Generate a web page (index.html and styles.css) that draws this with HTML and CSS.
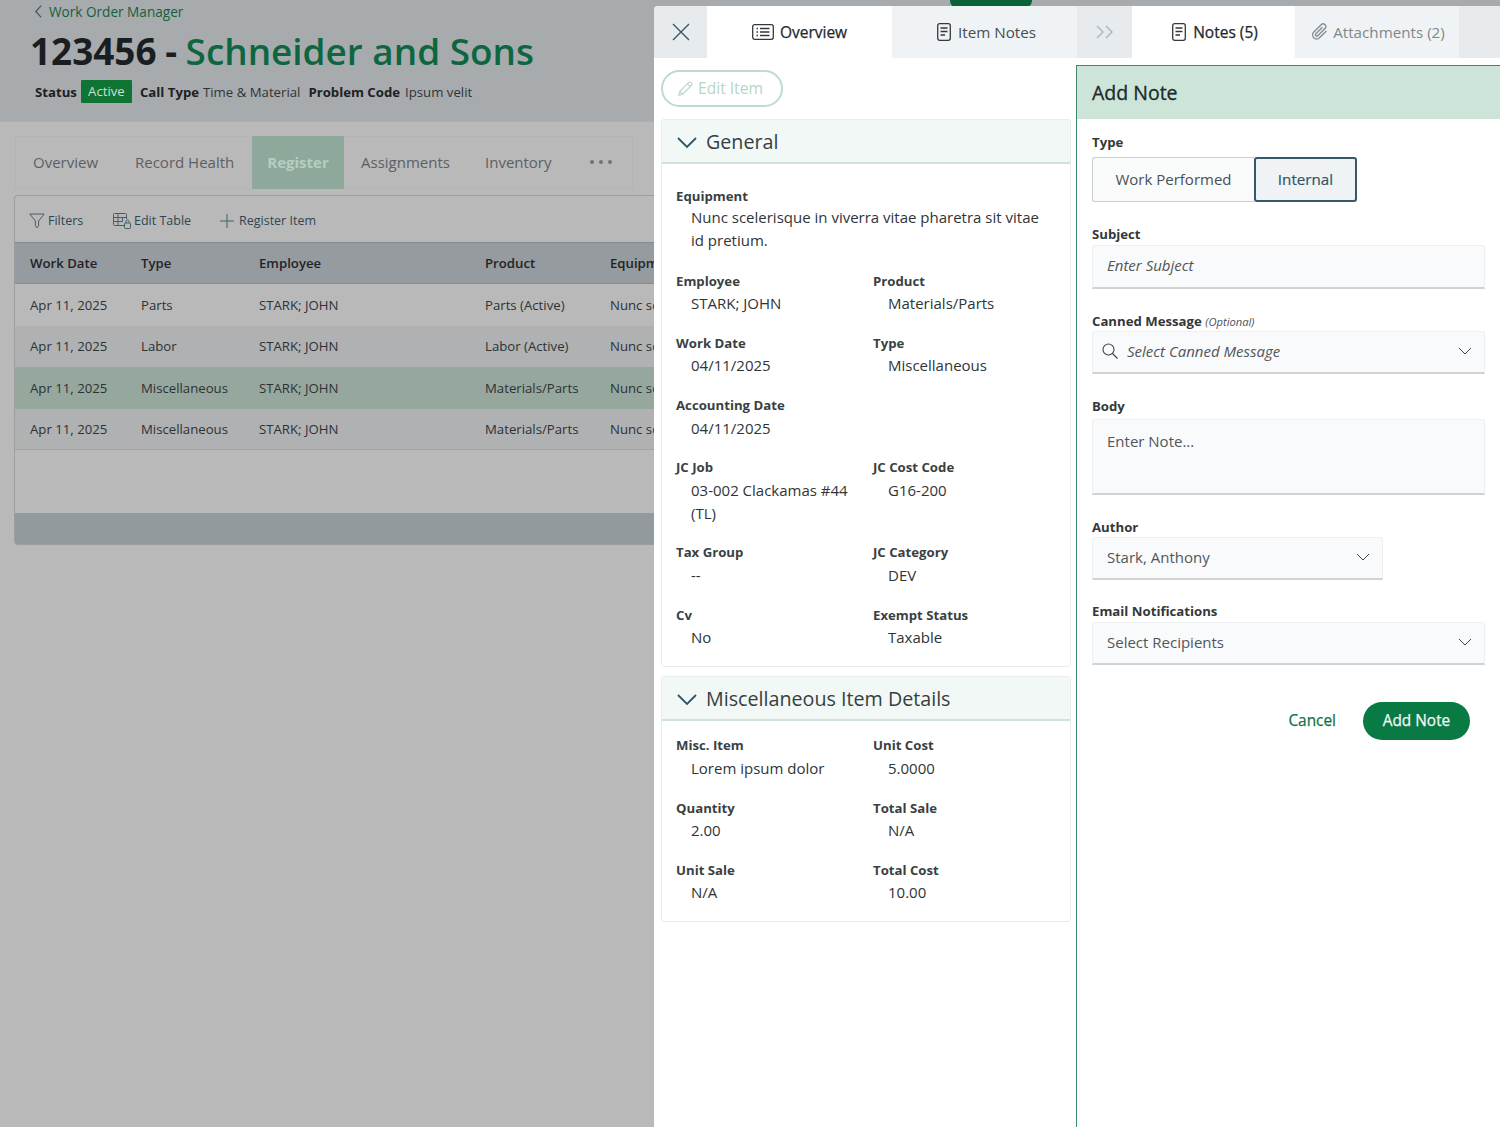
FILE: index.html
```html
<!DOCTYPE html>
<html lang="en">
<head>
<meta charset="utf-8">
<title>Work Order</title>
<link rel="stylesheet" href="styles.css">
</head>
<body>
<div class="app">
  <div class="backdrop">
    <header class="page-head">
      <a class="crumb"><svg class="crumb-icon" viewBox="0 0 10 16"><path d="M8 1.500 2 8l6 6.500"/></svg>Work Order Manager</a>
      <h1 class="title"><span class="title-num">123456 - </span><span class="title-name">Schneider and Sons</span></h1>
      <div class="meta">
        <b>Status</b><span class="badge">Active</span>
        <b class="meta-key">Call Type</b><span class="meta-val">Time &amp; Material</span>
        <b class="meta-key">Problem Code</b><span class="meta-val">Ipsum velit</span>
      </div>
    </header>
    <nav class="page-tabs">
      <span class="ptab ptab-overview">Overview</span>
      <span class="ptab ptab-health">Record Health</span>
      <span class="ptab ptab-active">Register</span>
      <span class="ptab ptab-assign">Assignments</span>
      <span class="ptab ptab-inv">Inventory</span>
      <span class="ptab-dots"><i></i><i></i><i></i></span>
    </nav>
    <section class="table-card">
      <div class="toolbar">
        <span class="tool tool-filter"><svg class="tool-icon" viewBox="0 0 16 16"><path d="M.8 1h14.400L9.600 8v4.600L8 14.800l-1.600-2.200V8z"/></svg>Filters</span>
        <span class="tool tool-edit"><svg class="tool-icon tool-icon-wide" viewBox="0 0 18 16"><path d="M11 12.500H1.500a1 1 0 0 1-1-1v-10a1 1 0 0 1 1-1h11a1 1 0 0 1 1 1V6M.5 4.500h13M.5 8.500h9M5 .5v12M9.500 4.500v4"/><rect x="11.500" y="10" width="6" height="5.500" rx=".8"/><path d="M13 10V8.500a1.500 1.500 0 0 1 3 0V10"/></svg>Edit Table</span>
        <span class="tool"><svg class="tool-icon" viewBox="0 0 16 16"><path d="M7 1v14M0 8h14"/></svg>Register Item</span>
      </div>
      <div class="grid-row grid-head"><span>Work Date</span><span>Type</span><span>Employee</span><span>Product</span><span>Equipm</span></div>
      <div class="grid-row row-a"><span>Apr 11, 2025</span><span>Parts</span><span>STARK; JOHN</span><span>Parts (Active)</span><span>Nunc sc</span></div>
      <div class="grid-row row-b"><span>Apr 11, 2025</span><span>Labor</span><span>STARK; JOHN</span><span>Labor (Active)</span><span>Nunc sc</span></div>
      <div class="grid-row row-sel"><span>Apr 11, 2025</span><span>Miscellaneous</span><span>STARK; JOHN</span><span>Materials/Parts</span><span>Nunc sc</span></div>
      <div class="grid-row row-b row-last"><span>Apr 11, 2025</span><span>Miscellaneous</span><span>STARK; JOHN</span><span>Materials/Parts</span><span>Nunc sc</span></div>
      <div class="table-empty"></div>
      <div class="table-foot"></div>
    </section>
    <span class="peek-button"></span>
  </div>

  <aside class="drawer">
    <div class="pane pane-left">
      <div class="tabs">
        <span class="tab-icon-cell tab-close"><svg class="close-icon" viewBox="0 0 18 18"><path d="M1 1l16 16M17 1 1 17"/></svg></span>
        <span class="tab tab-on tab-over"><svg class="list-icon" viewBox="0 0 22 16"><rect x=".7" y=".7" width="20.600" height="14.600" rx="2"/><path d="M4.500 4.500h1.500M4.500 8h1.500M4.500 11.500h1.500M8 4.500h9.500M8 8h9.500M8 11.500h9.500"/></svg>Overview</span>
        <span class="tab tab-off tab-inotes"><svg class="doc-icon" viewBox="0 0 14 18"><rect x=".7" y=".7" width="12.600" height="16.600" rx="2"/><path d="M3.500 5h7M3.500 8.500h7M3.500 12h4.500"/></svg>Item Notes</span>
      </div>
      <div class="pane-body">
        <button class="edit-btn"><svg class="pencil-icon" viewBox="0 0 16 16"><path d="M1 15l1-4L11.500 1.500a1.400 1.400 0 0 1 2 0l1 1a1.400 1.400 0 0 1 0 2L5 14zM2 11l3 3M10 3l3 3"/></svg><span>Edit Item</span></button>
        <section class="card">
          <h2 class="card-head"><svg class="chev-big" viewBox="0 0 20 12"><path d="M1 1l9 9 9-9"/></svg>General</h2>
          <div class="fields fields-general">
            <div class="field field-wide field-first"><div class="f-label">Equipment</div><div class="f-value">Nunc scelerisque in viverra vitae pharetra sit vitae id pretium.</div></div>
            <div class="field"><div class="f-label">Employee</div><div class="f-value">STARK; JOHN</div></div>
            <div class="field"><div class="f-label">Product</div><div class="f-value">Materials/Parts</div></div>
            <div class="field"><div class="f-label">Work Date</div><div class="f-value">04/11/2025</div></div>
            <div class="field"><div class="f-label">Type</div><div class="f-value">Miscellaneous</div></div>
            <div class="field field-wide"><div class="f-label">Accounting Date</div><div class="f-value">04/11/2025</div></div>
            <div class="field"><div class="f-label">JC Job</div><div class="f-value">03-002 Clackamas #44 (TL)</div></div>
            <div class="field"><div class="f-label">JC Cost Code</div><div class="f-value">G16-200</div></div>
            <div class="field"><div class="f-label">Tax Group</div><div class="f-value">--</div></div>
            <div class="field"><div class="f-label">JC Category</div><div class="f-value">DEV</div></div>
            <div class="field"><div class="f-label">Cv</div><div class="f-value">No</div></div>
            <div class="field"><div class="f-label">Exempt Status</div><div class="f-value">Taxable</div></div>
          </div>
        </section>
        <section class="card">
          <h2 class="card-head"><svg class="chev-big" viewBox="0 0 20 12"><path d="M1 1l9 9 9-9"/></svg>Miscellaneous Item Details</h2>
          <div class="fields fields-misc">
            <div class="field"><div class="f-label">Misc. Item</div><div class="f-value">Lorem ipsum dolor</div></div>
            <div class="field"><div class="f-label">Unit Cost</div><div class="f-value">5.0000</div></div>
            <div class="field"><div class="f-label">Quantity</div><div class="f-value">2.00</div></div>
            <div class="field"><div class="f-label">Total Sale</div><div class="f-value">N/A</div></div>
            <div class="field"><div class="f-label">Unit Sale</div><div class="f-value">N/A</div></div>
            <div class="field"><div class="f-label">Total Cost</div><div class="f-value">10.00</div></div>
          </div>
        </section>
      </div>
    </div>

    <div class="pane pane-right">
      <div class="tabs">
        <span class="tab-icon-cell tab-expand"><svg class="dbl-icon" viewBox="0 0 18 14"><path d="M1 1l6 6-6 6M10 1l6 6-6 6"/></svg></span>
        <span class="tab tab-on tab-notes"><svg class="doc-icon" viewBox="0 0 14 18"><rect x=".7" y=".7" width="12.600" height="16.600" rx="2"/><path d="M3.500 5h7M3.500 8.500h7M3.500 12h4.500"/></svg>Notes (5)</span>
        <span class="tab tab-off tab-attach"><svg class="clip-icon" viewBox="0 0 16 17"><path d="M14.500 7.500 8 14a3.800 3.800 0 0 1-5.400-5.400l7-7a2.500 2.500 0 0 1 3.600 3.600l-6.800 6.800a1.200 1.200 0 0 1-1.800-1.800L10.800 4"/></svg>Attachments (2)</span>
        <span class="tab-fill"></span>
      </div>
      <form class="note-form">
        <h2 class="form-head">Add Note</h2>
        <div class="form-body">
          <div class="ctl-group">
            <label class="ctl-label">Type</label>
            <div class="toggle">
              <span class="toggle-opt">Work Performed</span>
              <span class="toggle-opt toggle-on">Internal</span>
            </div>
          </div>
          <div class="ctl-group">
            <label class="ctl-label">Subject</label>
            <div class="ctl ctl-subject ph-italic">Enter Subject</div>
          </div>
          <div class="ctl-group">
            <label class="ctl-label">Canned Message <em class="optional">(Optional)</em></label>
            <div class="ctl ctl-canned ph-italic">
              <svg class="search-icon" viewBox="0 0 16 16"><circle cx="6.500" cy="6.500" r="5.500"/><path d="M10.500 10.500 15.500 15.500"/></svg>
              <span>Select Canned Message</span>
              <svg class="chev" viewBox="0 0 14 8"><path d="M1 1l6 6 6-6"/></svg>
            </div>
          </div>
          <div class="ctl-group">
            <label class="ctl-label">Body</label>
            <div class="ctl ctl-body">Enter Note...</div>
          </div>
          <div class="ctl-group">
            <label class="ctl-label">Author</label>
            <div class="ctl ctl-author"><span>Stark, Anthony</span><svg class="chev" viewBox="0 0 14 8"><path d="M1 1l6 6 6-6"/></svg></div>
          </div>
          <div class="ctl-group">
            <label class="ctl-label">Email Notifications</label>
            <div class="ctl ctl-email"><span>Select Recipients</span><svg class="chev" viewBox="0 0 14 8"><path d="M1 1l6 6 6-6"/></svg></div>
          </div>
          <div class="actions">
            <span class="cancel">Cancel</span>
            <span class="submit">Add Note</span>
          </div>
        </div>
      </form>
    </div>
  </aside>
</div>
</body>
</html>
```
FILE: styles.css
```css
* { box-sizing: border-box; }
html, body { margin: 0; padding: 0; }
body { font-family: "Open Sans", "Liberation Sans", sans-serif; color: #2c3236; background: #b9b9b9; }
svg { fill: none; stroke: currentColor; stroke-width: 1.3; flex: none; display: block; }
.app { position: relative; width: 1500px; height: 1127px; overflow: hidden; background: #b9b9b9; }

/* dimmed page */
.backdrop { width: 1500px; height: 1127px; }
.page-head { height: 122px; background: #a7abae; padding: 1px 0 0 31px; border-bottom: 1px solid #adb0b2; }
.crumb { display: flex; align-items: center; height: 20px; font-size: 13.600px; color: #155f3d; font-weight: 500; padding-left: 3px; }
.crumb-icon { width: 9px; height: 15px; margin-right: 6px; color: #3b5560; }
.title { margin: 2px 0 0 -1px; font-size: 36.900px; line-height: 56px; letter-spacing: 0; white-space: nowrap; }
.title-num { color: #1b1e20; font-weight: 700; word-spacing: -1px; }
.title-name { color: #0d6640; font-weight: 600; }
.meta { display: flex; align-items: center; height: 23px; margin-top: 1px; padding-left: 4px; font-size: 13.200px; white-space: nowrap; color: #2f3437; }
.meta b { font-weight: 700; color: #1d2123; }
.badge { width: 51px; height: 23px; margin: 0 8px 0 4px; line-height: 23px; text-align: center; color: #c7e2cf; background: #0f7434; border-radius: 1px; }
.meta-val { margin: 0 8px 0 4px; }
.meta-val:last-child { margin-left: 5px; }

.page-tabs { position: relative; display: flex; align-items: stretch; height: 53px; width: 618px; margin: 14px 0 0 15px; border: 1px solid #b4b4b4; border-radius: 2px; font-size: 15px; color: #5c6063; }
.ptab { display: flex; align-items: center; white-space: nowrap; padding-bottom: 1px; }
.ptab-overview { margin-left: 17px; width: 102px; }
.ptab-health { width: 117px; }
.ptab-active { width: 92px; margin: -1px 0; justify-content: center; background: #8ea89b; color: #b5cec2; font-weight: 700; }
.ptab-assign { margin-left: 17px; width: 124px; }
.ptab-inv { width: 105px; }
.ptab-dots { display: flex; align-items: center; gap: 5px; padding-bottom: 1px; }
.ptab-dots i { width: 4px; height: 4px; border-radius: 50%; background: #6f7477; }

.table-card { width: 640px; height: 350px; margin: 6px 0 0 14px; border: 1px solid #999fa3; border-right: 0; border-radius: 4px 0 0 4px; overflow: hidden; font-size: 13.200px; display: flex; flex-direction: column; background: #b9b9b9; }
.toolbar { display: flex; align-items: center; height: 46px; flex: none; padding: 3px 0 0 14px; font-size: 12.500px; color: #30464f; font-weight: 500; }
.tool { display: flex; align-items: center; gap: 3px; white-space: nowrap; }
.tool-filter { width: 84px; }
.tool-edit { width: 107px; }
.tool-icon { width: 16px; height: 16px; color: #44606c; stroke-width: 1; }
.tool-icon-wide { width: 18px; }
.grid-row { display: grid; grid-template-columns: 111px 118px 226px 125px 44px; align-items: center; padding-left: 15px; height: 41.500px; flex: none; color: #2d3134; white-space: nowrap; }
.grid-row span:last-child { overflow: hidden; }
.grid-head { height: 42px; background: #959b9f; border-top: 1px solid #858c90; border-bottom: 1px solid #858c90; font-weight: 600; color: #1f2427; }
.row-a { background: #b9b9b9; }
.row-b { background: #afb1b3; }
.row-sel { background: #96a89e; }
.row-last { border-bottom: 1px solid #a0a4a6; }
.table-empty { flex: 1; }
.table-foot { height: 31px; flex: none; background: #929a9e; }
.peek-button { position: absolute; left: 950px; top: -14px; width: 82px; height: 30px; border-radius: 50%; background: #0a6238; }

/* drawer */
.drawer { position: absolute; left: 654px; top: 6px; right: 0; bottom: 0; display: flex; background: #fff; border-top-left-radius: 4px; overflow: hidden; }
.pane { display: flex; flex-direction: column; min-width: 0; }
.pane-left { width: 423px; flex: none; }
.pane-right { flex: 1; }
.tabs { display: flex; height: 52px; flex: none; font-size: 15.200px; }
.tab-icon-cell { display: flex; align-items: center; justify-content: center; background: #e7ebee; }
.tab-close { width: 53px; color: #2f5568; }
.tab-expand { width: 55px; color: #a9b3b9; }
.close-icon { width: 18px; height: 18px; }
.dbl-icon { width: 18px; height: 14px; }
.tab { display: flex; align-items: center; justify-content: center; gap: 7px; padding-bottom: 1px; white-space: nowrap; }
.tab-on { background: #fff; color: #23282b; font-size: 15.500px; -webkit-text-stroke: .25px #23282b; }
.tab-off { background: #f0f3f5; color: #474d51; }
.tab-over { width: 185px; gap: 6px; }
.tab-inotes { width: 185px; padding-left: 4px; }
.tab-notes { width: 163px; padding-left: 3px; }
.tab-attach { width: 164px; padding-left: 2px; color: #7f878c; gap: 5px; }
.tab-fill { flex: 1; background: #e7ebee; }
.list-icon { width: 22px; height: 16px; color: #33393d; }
.doc-icon { width: 14px; height: 18px; color: #33393d; }
.clip-icon { width: 17px; height: 18px; color: #858d92; }

.pane-body { padding: 12px 7px 0; }
.edit-btn { display: flex; align-items: center; gap: 5px; width: 122px; height: 37px; padding: 0 0 0 15px; border: 2px solid #bcdccd; border-radius: 19px; background: #fff; font: 500 15.600px "Open Sans", sans-serif; color: #b4d6c6; }
.edit-btn span { padding-bottom: 2px; }
.pencil-icon { width: 15px; height: 15px; color: #c3d4cd; }
.card { margin: 12px 0 0; width: 410px; border: 1px solid #e8edeb; border-radius: 3px; }
.card + .card { margin-top: 9px; }
.card-head { display: flex; align-items: center; gap: 9px; height: 44px; margin: 0; padding: 1px 0 0 15px; font-size: 19.700px; font-weight: 400; color: #363e42; background: #f2f8f5; border-bottom: 2px solid #cfe3da; }
.chev-big { width: 20px; height: 12px; margin-top: 2px; color: #2f5568; stroke-width: 1.800; }
.fields { display: grid; grid-template-columns: 197px 197px; row-gap: 17.700px; padding: 0 0 17px 14px; }
.fields-general { padding-top: 22px; }
.fields-misc { padding-top: 14px; row-gap: 17.900px; }
.field-wide { grid-column: 1 / -1; }
.f-label { font-size: 13.200px; line-height: 20px; font-weight: 700; color: #3a3f42; }
.f-value { font-size: 15px; line-height: 23px; margin-top: 1.500px; padding-left: 15px; color: #2f3437; }
.field-wide .f-value { padding-right: 28px; }
.field-first { margin-bottom: 1.500px; }
.field-first .f-value { margin-top: -.5px; }

/* note form */
.note-form { flex: 1; margin: 7px 0 0 -1px; border-top: 1px solid #3c8a6a; border-left: 1px solid #3c8a6a; display: flex; flex-direction: column; }
.form-head { height: 53px; margin: 0; padding: 0 0 0 15px; line-height: 54px; font-size: 19.500px; font-weight: 400; -webkit-text-stroke: .3px #20282b; color: #20282b; background: #cce5d8; }
.form-body { padding: 13px 15px 0 15px; display: flex; flex-direction: column; gap: 22px; font-size: 15px; }
.ctl-label { display: block; font-size: 13.200px; line-height: 20px; font-weight: 700; color: #33383b; }
.optional { font-size: 11.200px; font-weight: 400; color: #4b5154; }
.toggle { display: flex; width: 265px; height: 45px; margin-top: 5px; }
.toggle-opt { display: flex; align-items: center; justify-content: center; width: 162px; padding-bottom: 2px; background: #fafbfb; border: 1px solid #c9ced1; border-right: 0; border-radius: 3px 0 0 3px; color: #4a5054; }
.toggle-on { width: 103px; background: #f0f3f5; border: 2px solid #35596b; border-radius: 3px; color: #2f5568; font-size: 15.200px; -webkit-text-stroke: .2px #2f5568; }
.ctl { display: flex; align-items: center; height: 43px; padding: 0 12px 2px 14px; background: #f9fafb; border: 1px solid #edf0f2; border-bottom: 2px solid #cdd3d6; border-radius: 3px 3px 0 0; color: #50565a; }
.ph-italic { font-style: italic; }
.ctl-subject { margin-top: 1px; height: 44px; padding-bottom: 4px; }
.ctl-canned { margin-top: -1px; padding-left: 9px; gap: 9px; }
.ctl-canned span, .ctl-author span, .ctl-email span { flex: 1; }
.ctl-body { margin-top: 3px; height: 76px; align-items: flex-start; padding-top: 10px; line-height: 22px; }
.ctl-author { width: 291px; height: 43px; margin-bottom: -1px; }
.ctl-email { height: 43px; margin-top: 1px; }
.search-icon { width: 16px; height: 16px; color: #3e4549; stroke-width: 1.100; }
.chev { width: 14px; height: 8px; color: #3e4549; stroke-width: 1; }
.actions { display: flex; justify-content: flex-end; align-items: center; gap: 27px; margin-top: 15px; padding-right: 15px; }
.cancel { color: #0d7446; font-size: 15.400px; -webkit-text-stroke: .25px #0d7446; padding-bottom: 1px; }
.submit { width: 107px; height: 38px; line-height: 37px; text-align: center; border-radius: 19px; background: #0a7a45; color: #f2f8f5; font-size: 15.400px; -webkit-text-stroke: .25px #f2f8f5; }
```
